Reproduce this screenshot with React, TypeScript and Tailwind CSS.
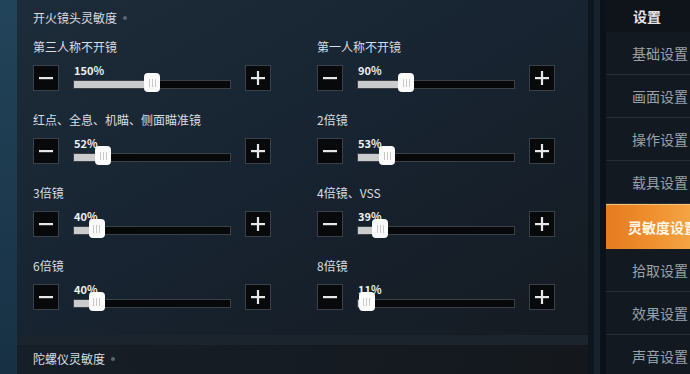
import React from 'react';

type Item = { label: string; value: number };

const rows: [Item, Item][] = [
  [{ label: '第三人称不开镜', value: 150 }, { label: '第一人称不开镜', value: 90 }],
  [{ label: '红点、全息、机瞄、侧面瞄准镜', value: 52 }, { label: '2倍镜', value: 53 }],
  [{ label: '3倍镜', value: 40 }, { label: '4倍镜、VSS', value: 39 }],
  [{ label: '6倍镜', value: 40 }, { label: '8倍镜', value: 11 }],
];

const menu = ['基础设置', '画面设置', '操作设置', '载具设置', '灵敏度设置', '拾取设置', '效果设置', '声音设置'];

const StepButton: React.FC<{ plus?: boolean }> = ({ plus }) => (
  <div className="w-[26px] h-[26px] shrink-0 bg-[#07090b] border border-[#3a4149] flex items-center justify-center">
    <svg width="16" height="16" viewBox="0 0 16 16">
      <rect x="1" y="7" width="14" height="2.2" fill="#e8e8e8" />
      {plus && <rect x="6.9" y="1" width="2.2" height="14" fill="#e8e8e8" />}
    </svg>
  </div>
);

const Slider: React.FC<{ value: number }> = ({ value }) => {
  const pct = value / 300;
  return (
    <div className="relative flex-1 h-[26px]">
      <div className="absolute left-[1px] top-[-1px] text-[11px] leading-[13px] font-bold text-[#eef0f2]">{value}%</div>
      <div className="absolute left-0 right-0 top-[15px] h-[9px] bg-[#06080a] border border-[#3b4147] overflow-hidden">
        <div className="h-full bg-[#c9cbcd]" style={{ width: `${pct * 100}%` }} />
      </div>
      <div
        className="absolute top-[8px] w-[16px] h-[19px] bg-[#fbfbfb] rounded-[4px] flex items-center justify-center gap-[2px]"
        style={{ left: `calc(${pct * 100}% - 8px + ${(0.5 - pct) * 8}px)` }}
      >
        <div className="w-[1px] h-[8px] bg-[#c8c8c8]" />
        <div className="w-[1px] h-[8px] bg-[#c8c8c8]" />
        <div className="w-[1px] h-[8px] bg-[#c8c8c8]" />
      </div>
    </div>
  );
};

const Control: React.FC<{ item: Item }> = ({ item }) => (
  <div className="flex flex-col">
    <div className="h-[16px] text-[12px] leading-[16px] text-[#d9dde1]">{item.label}</div>
    <div className="flex items-start gap-[14px] mt-[10px] w-[238px]">
      <StepButton />
      <Slider value={item.value} />
      <StepButton plus />
    </div>
  </div>
);

export default function App() {
  return (
    <div
      className="w-[690px] h-[374px] flex overflow-hidden bg-[#101820]"
      style={{ fontFamily: '"Noto Sans CJK SC", "Noto Sans", sans-serif' }}
    >
      <div className="w-[17px] shrink-0 bg-gradient-to-b from-[#22445a] via-[#1d3a4e] to-[#173044]" />
      <div className="w-[571px] shrink-0 flex flex-col">
        <div className="h-[335px] px-[16px] pt-[10px] bg-gradient-to-br from-[#1d2c3a] via-[#172330] to-[#151b22]">
          <div className="flex items-center gap-[6px] h-[16px] text-[12px] leading-[16px] text-[#d9dde1]">
            开火镜头灵敏度
            <span className="w-[4px] h-[4px] rounded-full bg-[#5a6774]" />
          </div>
          <div className="flex flex-col gap-[21px] mt-[13px]">
            {rows.map((r, i) => (
              <div key={i} className="grid grid-cols-[284px_284px]">
                <Control item={r[0]} />
                <Control item={r[1]} />
              </div>
            ))}
          </div>
        </div>
        <div className="h-[10px] bg-[#1b232c]" />
        <div className="flex-1 px-[16px] pt-[6px] bg-gradient-to-r from-[#161e27] to-[#14181d]">
          <div className="flex items-center gap-[6px] text-[12px] leading-[16px] text-[#d9dde1]">
            陀螺仪灵敏度
            <span className="w-[4px] h-[4px] rounded-full bg-[#5a6774]" />
          </div>
        </div>
      </div>
      <div className="w-[18px] shrink-0 flex">
        <div className="w-[6px] bg-[#0d151d]" />
        <div className="w-[6px] bg-[#16222d]" />
        <div className="w-[6px] bg-[#0b1118]" />
      </div>
      <div className="flex-1 flex flex-col bg-[#131920] overflow-hidden">
        <div className="h-[32px] shrink-0 bg-[#0e141a] flex items-center pl-[27px] text-[14px] font-bold text-[#e4e6e8] whitespace-nowrap">
          设置
        </div>
        {menu.map((m) => {
          const active = m === '灵敏度设置';
          return active ? (
            <div
              key={m}
              className="h-[45px] shrink-0 -ml-[2px] bg-gradient-to-r from-[#e47a1e] via-[#ee8d2c] to-[#f3a443] border-t border-[#f6c27a] flex items-center pl-[24px] text-[14px] font-bold text-[#fff6ea] whitespace-nowrap"
            >
              {m}
            </div>
          ) : (
            <div
              key={m}
              className="h-[43px] shrink-0 border-b border-[#262d35] flex items-center pl-[26px] text-[14px] text-[#9ba1a7] whitespace-nowrap"
            >
              {m}
            </div>
          );
        })}
      </div>
    </div>
  );
}
